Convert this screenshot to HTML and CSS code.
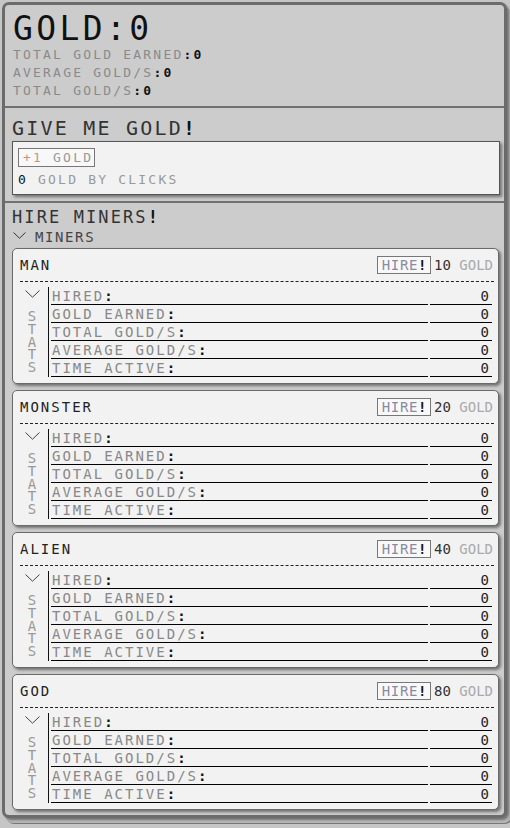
FILE: index.html
```html
<!DOCTYPE html>
<html>
<head>
<meta charset="utf-8">
<link rel="stylesheet" href="styles.css">
</head>
<body>
<div class="wrap">
  <section class="sec sec-top">
    <div class="gold">GOLD<span class="k">:</span>0</div>
    <div class="small">TOTAL GOLD EARNED<span class="k">:0</span></div>
    <div class="small">AVERAGE GOLD/S<span class="k">:0</span></div>
    <div class="small">TOTAL GOLD/S<span class="k">:0</span></div>
  </section>
  <section class="sec sec-click">
    <div class="h2">GIVE ME GOLD<span class="k">!</span></div>
    <div class="box">
      <button class="btn-gold"><span class="plus">+1</span> GOLD</button>
      <div class="small clicks"><span class="k">0</span> GOLD BY CLICKS</div>
    </div>
  </section>
  <section class="sec sec-hire">
    <div class="h3">HIRE MINERS<span class="k">!</span></div>
    <div class="miners-toggle"><svg class="chev" width="13" height="7" viewBox="0 0 13 7"><polyline points="0.5,0.5 6.5,6.2 12.5,0.5" fill="none" stroke="#333" stroke-width="1"/></svg><span>MINERS</span></div>
    <div class="cards">

      <div class="card">
        <div class="card-head">
          <span class="name">MAN</span>
          <button class="hire">HIRE<span class="k">!</span></button>
          <span class="cost"><span class="num">10</span> GOLD</span>
        </div>
        <div class="stats">
          <div class="stats-side">
            <svg class="chev" width="15" height="8" viewBox="0 0 15 8"><polyline points="0.5,0.5 7.5,7.2 14.5,0.5" fill="none" stroke="#444" stroke-width="1"/></svg>
            <div class="vert">STATS</div>
          </div>
          <div class="rows">
            <div class="row"><span class="lab">HIRED<span class="k">:</span></span><span class="val">0</span></div>
            <div class="row"><span class="lab">GOLD EARNED<span class="k">:</span></span><span class="val">0</span></div>
            <div class="row"><span class="lab">TOTAL GOLD/S<span class="k">:</span></span><span class="val">0</span></div>
            <div class="row"><span class="lab">AVERAGE GOLD/S<span class="k">:</span></span><span class="val">0</span></div>
            <div class="row"><span class="lab">TIME ACTIVE<span class="k">:</span></span><span class="val">0</span></div>
          </div>
        </div>
      </div>

      <div class="card">
        <div class="card-head">
          <span class="name">MONSTER</span>
          <button class="hire">HIRE<span class="k">!</span></button>
          <span class="cost"><span class="num">20</span> GOLD</span>
        </div>
        <div class="stats">
          <div class="stats-side">
            <svg class="chev" width="15" height="8" viewBox="0 0 15 8"><polyline points="0.5,0.5 7.5,7.2 14.5,0.5" fill="none" stroke="#444" stroke-width="1"/></svg>
            <div class="vert">STATS</div>
          </div>
          <div class="rows">
            <div class="row"><span class="lab">HIRED<span class="k">:</span></span><span class="val">0</span></div>
            <div class="row"><span class="lab">GOLD EARNED<span class="k">:</span></span><span class="val">0</span></div>
            <div class="row"><span class="lab">TOTAL GOLD/S<span class="k">:</span></span><span class="val">0</span></div>
            <div class="row"><span class="lab">AVERAGE GOLD/S<span class="k">:</span></span><span class="val">0</span></div>
            <div class="row"><span class="lab">TIME ACTIVE<span class="k">:</span></span><span class="val">0</span></div>
          </div>
        </div>
      </div>

      <div class="card">
        <div class="card-head">
          <span class="name">ALIEN</span>
          <button class="hire">HIRE<span class="k">!</span></button>
          <span class="cost"><span class="num">40</span> GOLD</span>
        </div>
        <div class="stats">
          <div class="stats-side">
            <svg class="chev" width="15" height="8" viewBox="0 0 15 8"><polyline points="0.5,0.5 7.5,7.2 14.5,0.5" fill="none" stroke="#444" stroke-width="1"/></svg>
            <div class="vert">STATS</div>
          </div>
          <div class="rows">
            <div class="row"><span class="lab">HIRED<span class="k">:</span></span><span class="val">0</span></div>
            <div class="row"><span class="lab">GOLD EARNED<span class="k">:</span></span><span class="val">0</span></div>
            <div class="row"><span class="lab">TOTAL GOLD/S<span class="k">:</span></span><span class="val">0</span></div>
            <div class="row"><span class="lab">AVERAGE GOLD/S<span class="k">:</span></span><span class="val">0</span></div>
            <div class="row"><span class="lab">TIME ACTIVE<span class="k">:</span></span><span class="val">0</span></div>
          </div>
        </div>
      </div>

      <div class="card">
        <div class="card-head">
          <span class="name">GOD</span>
          <button class="hire">HIRE<span class="k">!</span></button>
          <span class="cost"><span class="num">80</span> GOLD</span>
        </div>
        <div class="stats">
          <div class="stats-side">
            <svg class="chev" width="15" height="8" viewBox="0 0 15 8"><polyline points="0.5,0.5 7.5,7.2 14.5,0.5" fill="none" stroke="#444" stroke-width="1"/></svg>
            <div class="vert">STATS</div>
          </div>
          <div class="rows">
            <div class="row"><span class="lab">HIRED<span class="k">:</span></span><span class="val">0</span></div>
            <div class="row"><span class="lab">GOLD EARNED<span class="k">:</span></span><span class="val">0</span></div>
            <div class="row"><span class="lab">TOTAL GOLD/S<span class="k">:</span></span><span class="val">0</span></div>
            <div class="row"><span class="lab">AVERAGE GOLD/S<span class="k">:</span></span><span class="val">0</span></div>
            <div class="row"><span class="lab">TIME ACTIVE<span class="k">:</span></span><span class="val">0</span></div>
          </div>
        </div>
      </div>

    </div>
  </section>
</div>
</body>
</html>
```
FILE: styles.css
```css
html, body {
  margin: 0;
  padding: 0;
}
body {
  background: #c6c6c6;
  padding: 2px 3px 0 2px;
  height: 828px;
  box-sizing: border-box;
  font-family: "DejaVu Sans Mono", "Liberation Mono", monospace;
  color: #888;
}
.wrap {
  border: 3px solid #6b6b6b;
  border-radius: 7px;
  background: #cccccc;
  box-shadow: 2px 2px 2px rgba(0,0,0,0.35), 4px 5px 0 #b4b4b4, 5px 6px 0 #777;
}
.k {
  color: #111;
  font-weight: bold;
}
.sec {
  padding: 0 4px 0 7px;
}
.sec-top {
  padding-top: 7px;
  padding-bottom: 6px;
  border-bottom: 2px solid #717171;
}
.gold {
  font-size: 33px;
  line-height: 34px;
  letter-spacing: 3.4px;
  color: #111;
  padding-left: 1px;
}
.gold .k {
  font-weight: normal;
}
.small {
  font-size: 13px;
  line-height: 18px;
  letter-spacing: 2.2px;
  color: #8a8a8a;
  padding-left: 1px;
}
.sec-click {
  padding-top: 8px;
  padding-bottom: 6px;
  border-bottom: 2px solid #717171;
}
.h2 {
  font-size: 20px;
  line-height: 24px;
  letter-spacing: 2.2px;
  color: #333;
}
.box {
  margin-top: 1px;
  background: #f2f2f2;
  border: 1px solid #555;
  padding: 6px 5px 5px 5px;
  box-shadow: 2px 2px 3px rgba(0,0,0,0.45);
}
.btn-gold {
  display: block;
  height: 19px;
  box-sizing: border-box;
  margin: 0;
  padding: 0 1px 0 4px;
  border: 1px solid #777;
  background: #f8f8f8;
  font-family: inherit;
  font-size: 13px;
  line-height: 17px;
  letter-spacing: 2.2px;
  color: #999;
}
.btn-gold .plus {
  color: #c79484;
}
.clicks {
  margin-top: 4px;
  padding-left: 0;
  color: #999;
}
.clicks .k {
  font-weight: normal;
}
.sec-hire {
  padding-top: 4px;
  padding-bottom: 5px;
}
.h3 {
  font-size: 17px;
  line-height: 20px;
  letter-spacing: 2.1px;
  color: #333;
}
.miners-toggle {
  margin-top: 1px;
  display: flex;
  align-items: center;
  height: 18px;
  font-size: 14px;
  letter-spacing: 1.6px;
  color: #444;
  padding-left: 1px;
}
.miners-toggle .chev {
  margin-right: 9px;
  margin-top: -3px;
}
.cards {
  margin-top: 2px;
  display: flex;
  flex-direction: column;
  gap: 6px;
  margin-right: 1px;
}
.card {
  background: #f2f2f2;
  border: 1px solid #6a6a6a;
  border-radius: 5px;
  padding: 0 4px 6px 7px;
  box-shadow: 2px 2px 3px rgba(0,0,0,0.45);
}
.card-head {
  height: 32px;
  display: flex;
  align-items: center;
  border-bottom: 1px dashed #222;
  padding-right: 1px;
}
.name {
  margin-right: auto;
  font-size: 14px;
  letter-spacing: 2px;
  color: #222;
}
.hire {
  height: 18px;
  box-sizing: border-box;
  margin: 0;
  padding: 0 3px 0 4px;
  border: 1px solid #777;
  background: #f8f8f8;
  font-family: inherit;
  font-size: 14px;
  line-height: 16px;
  letter-spacing: 0.6px;
  color: #8a8aa6;
}
.cost {
  margin-left: 3px;
  font-size: 14px;
  color: #aaa;
}
.cost .num {
  color: #333;
}
.stats {
  margin-top: 5px;
  height: 90px;
  display: flex;
}
.stats-side {
  flex: none;
  width: 29px;
  height: 90px;
  box-sizing: border-box;
  padding: 3px 4px 0 0;
  border-right: 1px solid #111;
  display: flex;
  flex-direction: column;
  align-items: center;
  overflow: visible;
}
.stats-side .chev {
  display: block;
  flex: none;
}
.vert {
  flex: none;
  margin-top: 10px;
  writing-mode: vertical-lr;
  text-orientation: upright;
  font-size: 14px;
  line-height: 14px;
  letter-spacing: -3.2px;
  color: #999;
}
.rows {
  flex: 1;
  display: flex;
  flex-direction: column;
}
.row {
  display: flex;
  height: 18px;
}
.lab, .val {
  box-sizing: border-box;
  height: 18px;
  padding-top: 2px;
  font-size: 14px;
  line-height: 15px;
  border-bottom: 1px solid #000;
}
.lab {
  flex: 1;
  margin-left: 2px;
  padding-left: 1px;
  letter-spacing: 2px;
  color: #888;
}
.val {
  width: 62px;
  margin: 0 2px;
  text-align: right;
  padding-right: 3px;
  color: #222;
}
```
